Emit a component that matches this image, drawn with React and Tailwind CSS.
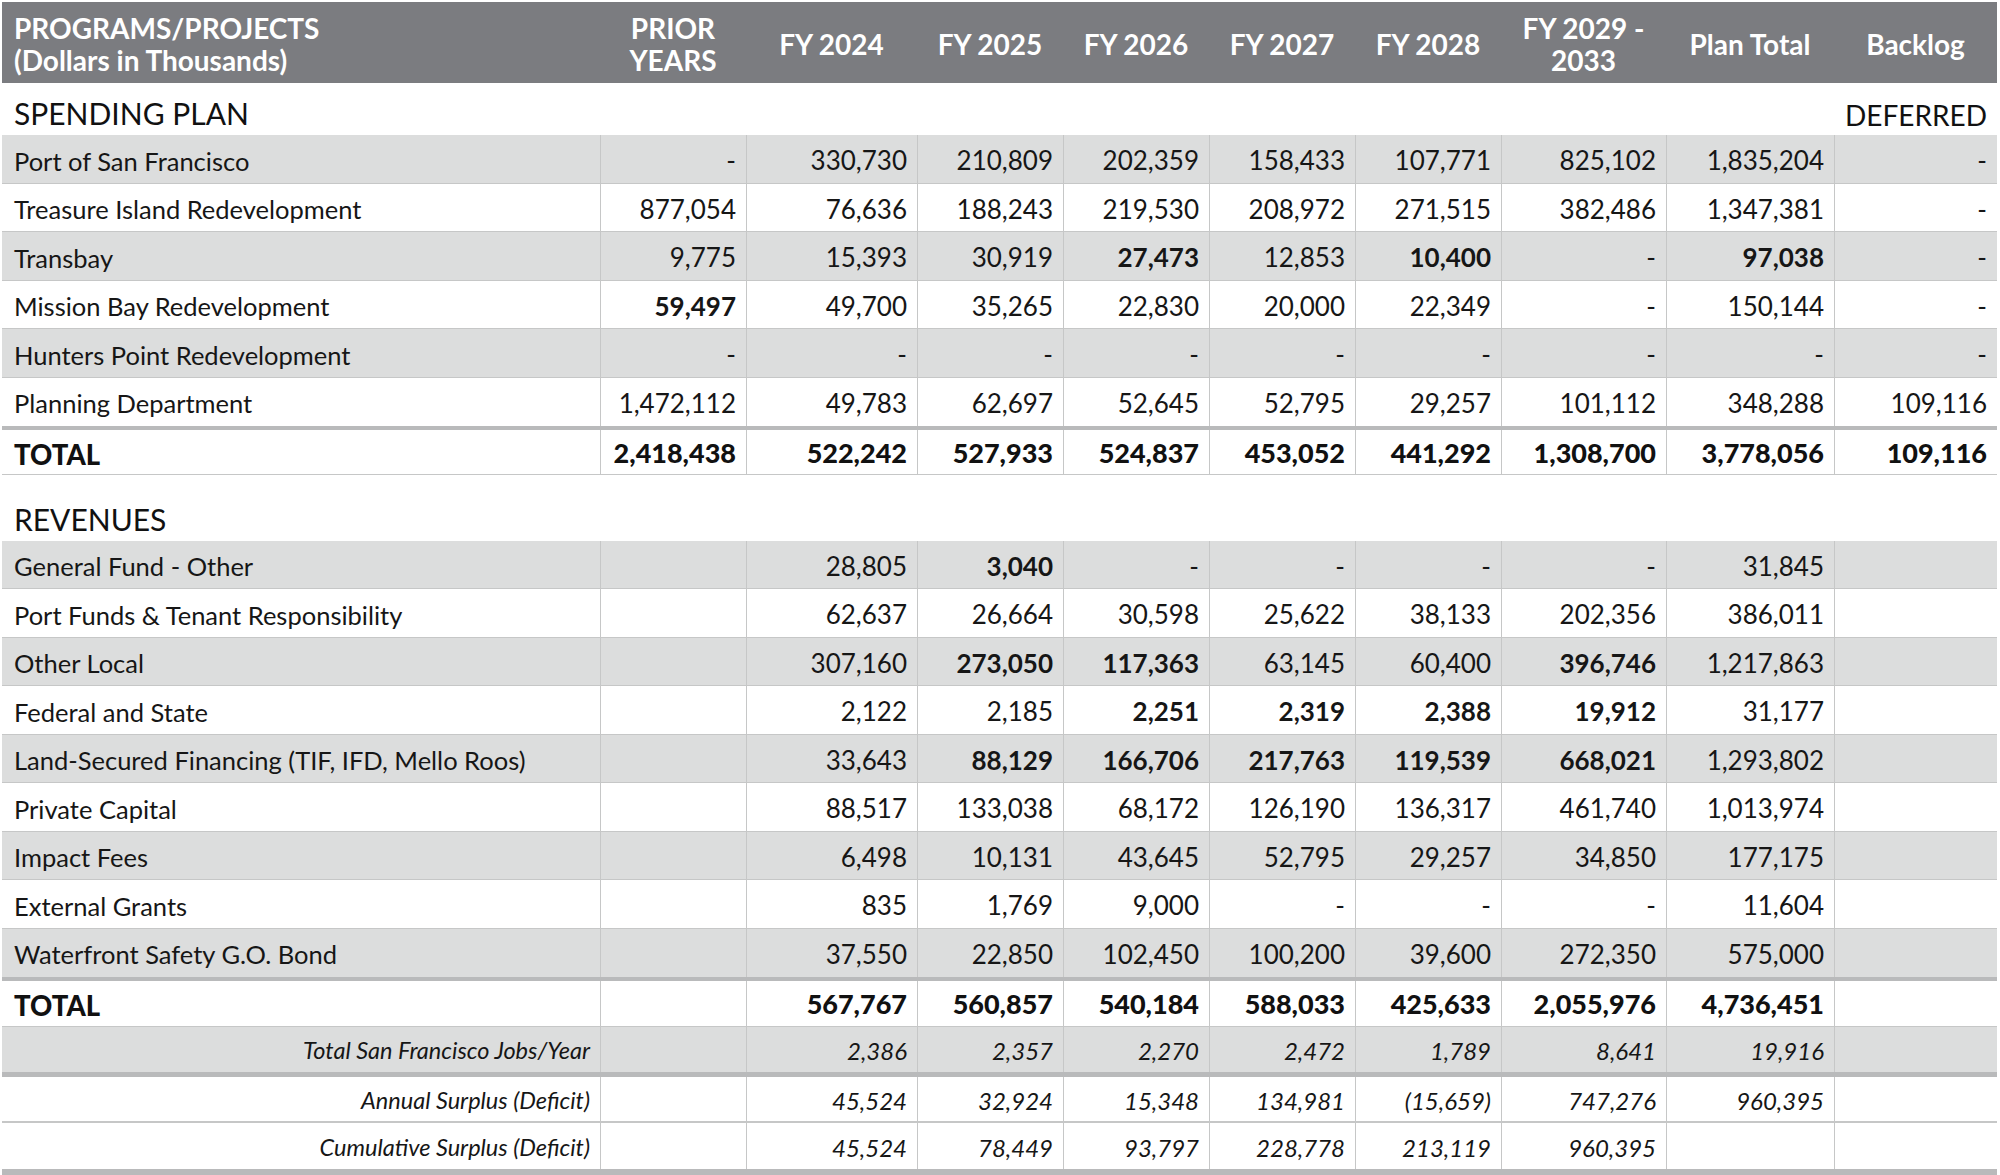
import React from "react";

const GRID = "grid grid-cols-[598px_146px_171px_146px_146px_146px_146px_165px_168px_163px]";

const spending = [
  { label: "Port of San Francisco", gray: true, v: ["-", "330,730", "210,809", "202,359", "158,433", "107,771", "825,102", "1,835,204", "-"] },
  { label: "Treasure Island Redevelopment", v: ["877,054", "76,636", "188,243", "219,530", "208,972", "271,515", "382,486", "1,347,381", "-"] },
  { label: "Transbay", gray: true, v: ["9,775", "15,393", "30,919", "27,473", "12,853", "10,400", "-", "97,038", "-"], b: [3, 5, 7] },
  { label: "Mission Bay Redevelopment", v: ["59,497", "49,700", "35,265", "22,830", "20,000", "22,349", "-", "150,144", "-"], b: [0] },
  { label: "Hunters Point Redevelopment", gray: true, v: ["-", "-", "-", "-", "-", "-", "-", "-", "-"] },
  { label: "Planning Department", v: ["1,472,112", "49,783", "62,697", "52,645", "52,795", "29,257", "101,112", "348,288", "109,116"], thick: true },
];

const revenues = [
  { label: "General Fund - Other", gray: true, v: ["", "28,805", "3,040", "-", "-", "-", "-", "31,845", ""], b: [2] },
  { label: "Port Funds & Tenant Responsibility", v: ["", "62,637", "26,664", "30,598", "25,622", "38,133", "202,356", "386,011", ""] },
  { label: "Other Local", gray: true, v: ["", "307,160", "273,050", "117,363", "63,145", "60,400", "396,746", "1,217,863", ""], b: [2, 3, 6] },
  { label: "Federal and State", v: ["", "2,122", "2,185", "2,251", "2,319", "2,388", "19,912", "31,177", ""], b: [3, 4, 5, 6] },
  { label: "Land-Secured Financing (TIF, IFD, Mello Roos)", gray: true, v: ["", "33,643", "88,129", "166,706", "217,763", "119,539", "668,021", "1,293,802", ""], b: [2, 3, 4, 5, 6] },
  { label: "Private Capital", v: ["", "88,517", "133,038", "68,172", "126,190", "136,317", "461,740", "1,013,974", ""] },
  { label: "Impact Fees", gray: true, v: ["", "6,498", "10,131", "43,645", "52,795", "29,257", "34,850", "177,175", ""] },
  { label: "External Grants", v: ["", "835", "1,769", "9,000", "-", "-", "-", "11,604", ""] },
  { label: "Waterfront Safety G.O. Bond", gray: true, v: ["", "37,550", "22,850", "102,450", "100,200", "39,600", "272,350", "575,000", ""], thick: true },
];

function DataRow({ row }) {
  const bold = row.b || [];
  return (
    <div
      className={`${GRID} ${row.gray ? "bg-[#dcdddd]" : "bg-white"} ${
        row.thick ? "h-[52px] border-b-4 border-[#b9babb]" : "h-[48.5px] border-b border-[#c6c7c7]"
      }`}
    >
      <div className="flex items-center pt-[4px] pl-[12px] text-[25.5px] text-[#161616]">{row.label}</div>
      {row.v.map((x, i) => (
        <div
          key={i}
          className={`flex items-center justify-end pt-[4px] pr-[10px] border-l border-[#c6c7c7] text-[26px] text-[#161616] ${
            bold.includes(i) ? "font-bold" : ""
          }`}
        >
          {x}
        </div>
      ))}
    </div>
  );
}

function TotalRow({ v, h }) {
  return (
    <div className={`${GRID} bg-white ${h} border-b border-[#c6c7c7]`}>
      <div className="flex items-center pt-[4px] pl-[12px] text-[27.5px] font-black text-[#111]">TOTAL</div>
      {v.map((x, i) => (
        <div key={i} className="flex items-center justify-end pt-[3px] pr-[10px] border-l border-[#c6c7c7] text-[27px] font-black text-[#111]">
          {x}
        </div>
      ))}
    </div>
  );
}

function ItalicRow({ label, v, gray, cls }) {
  return (
    <div className={`${GRID} ${gray ? "bg-[#dcdddd]" : "bg-white"} ${cls}`}>
      <div className="flex items-center justify-end pt-[4px] pr-[10px] text-[23.5px] italic text-[#161616]">{label}</div>
      {v.map((x, i) => (
        <div key={i} className="flex items-center justify-end pt-[4px] pr-[10px] border-l border-[#c6c7c7] text-[24px] italic text-[#161616]">
          {x}
        </div>
      ))}
    </div>
  );
}

const heads = [
  ["PRIOR", "YEARS"],
  ["FY 2024"],
  ["FY 2025"],
  ["FY 2026"],
  ["FY 2027"],
  ["FY 2028"],
  ["FY 2029 -", "2033"],
  ["Plan Total"],
  ["Backlog"],
];

export default function App() {
  return (
    <div className="w-[2000px] h-[1175px] bg-white pt-[2px] pl-[2px] overflow-hidden font-['Lato','Liberation_Sans',sans-serif]">
      <div className="w-[1995px]">
        {/* Header */}
        <div className={`${GRID} h-[81px] bg-[#7b7c80] text-white font-bold text-[28px] leading-[32px]`}>
          <div className="flex flex-col justify-center pl-[12px] pt-[2px]">
            <span>PROGRAMS/PROJECTS</span>
            <span>(Dollars in Thousands)</span>
          </div>
          {heads.map((h, i) => (
            <div key={i} className="flex flex-col items-center justify-center pt-[2px] text-center">
              {h.map((t, j) => (
                <span key={j}>{t}</span>
              ))}
            </div>
          ))}
        </div>

        {/* Spending plan label */}
        <div className="h-[52px] flex items-end justify-between pl-[12px] pr-[10px] text-[#111]">
          <span className="text-[30px] leading-[40px] pb-[2px]">SPENDING PLAN</span>
          <span className="text-[28px] leading-[34px] pb-[3px]">DEFERRED</span>
        </div>

        {spending.map((r, i) => (
          <DataRow key={i} row={r} />
        ))}

        <TotalRow h="h-[45px]" v={["2,418,438", "522,242", "527,933", "524,837", "453,052", "441,292", "1,308,700", "3,778,056", "109,116"]} />

        <div className="h-[66px] flex items-end pb-[2px] pl-[12px] text-[30px] leading-[40px] text-[#111]">REVENUES</div>

        {revenues.map((r, i) => (
          <DataRow key={i} row={r} />
        ))}

        <TotalRow h="h-[46px]" v={["", "567,767", "560,857", "540,184", "588,033", "425,633", "2,055,976", "4,736,451", ""]} />

        <ItalicRow
          gray
          cls="h-[50px] border-b-[5px] border-[#b9babb]"
          label="Total San Francisco Jobs/Year"
          v={["", "2,386", "2,357", "2,270", "2,472", "1,789", "8,641", "19,916", ""]}
        />
        <ItalicRow
          cls="h-[46px] border-b-2 border-[#c6c7c7]"
          label="Annual Surplus (Deficit)"
          v={["", "45,524", "32,924", "15,348", "134,981", "(15,659)", "747,276", "960,395", ""]}
        />
        <ItalicRow
          cls="h-[52px] border-b-[6px] border-[#b9babb]"
          label="Cumulative Surplus (Deficit)"
          v={["", "45,524", "78,449", "93,797", "228,778", "213,119", "960,395", "", ""]}
        />
      </div>
    </div>
  );
}
